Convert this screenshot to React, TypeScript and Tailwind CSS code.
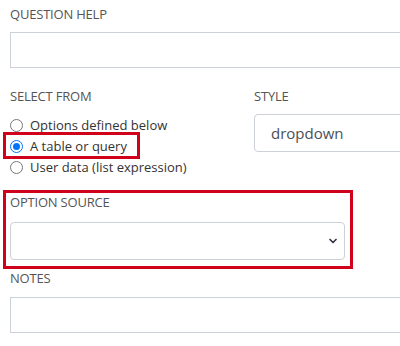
import { ChevronDown } from 'lucide-react';

const FONT = 'font-["Open_Sans","Noto_Sans",sans-serif]';

function Label({ children }: { children: string }) {
    return <div className="text-[13px] leading-[18px] text-[#555] tracking-[-0.2px]">{children}</div>;
}

function Radio({ checked, label }: { checked?: boolean; label: string }) {
    return (
        <div className="flex items-center h-[21px]">
            <span
                className={`w-[13px] h-[13px] rounded-full border flex items-center justify-center bg-white ${checked ? 'border-[#0075ff]' : 'border-[#767676]'}`}
            >
                {checked && <span className="w-[7px] h-[7px] rounded-full bg-[#0075ff]" />}
            </span>
            <span className="ml-[7px] text-[13px] text-[#333]">{label}</span>
        </div>
    );
}

export default function App() {
    return (
        <div className={`w-[400px] h-[346px] overflow-hidden bg-white ${FONT}`}>
            <div className="pl-[10px] pt-[5px]">
                <Label>QUESTION HELP</Label>
                <div className="mt-[9px] h-[36px] w-[420px] border border-[#ccd0d8]" />

                <div className="flex mt-[19px]">
                    <div className="w-[244px] shrink-0">
                        <Label>SELECT FROM</Label>
                        <div className="mt-[10px]">
                            <Radio label="Options defined below" />
                            <div className="relative">
                                <Radio checked label="A table or query" />
                                {/* annotation box */}
                                <span className="absolute -left-[7px] -top-[4px] w-[137px] h-[27px] border-[3px] border-[#d0011b]" />
                            </div>
                            <Radio label="User data (list expression)" />
                        </div>
                    </div>
                    <div className="shrink-0">
                        <Label>STYLE</Label>
                        <div className="mt-[9px] h-[38px] w-[200px] rounded-[4px] border border-[#ccd0d8] flex items-center pl-[16px] text-[15px] text-[#495057]">
                            dropdown
                        </div>
                    </div>
                </div>

                <div className="mt-[12px] -ml-[7px] w-[350px] border-[3px] border-[#d0011b] pl-[4px] pb-[6px]">
                    <Label>OPTION SOURCE</Label>
                    <div className="mt-[11px] h-[38px] w-[335px] rounded-[4px] border border-[#ccd0d8] flex items-center justify-end pr-[5px]">
                        <ChevronDown size={12} strokeWidth={3.5} className="text-[#343a40]" />
                    </div>
                </div>

                <Label>NOTES</Label>
                <div className="mt-[10px] h-[36px] w-[420px] border border-[#ccd0d8]" />
            </div>
        </div>
    );
}
